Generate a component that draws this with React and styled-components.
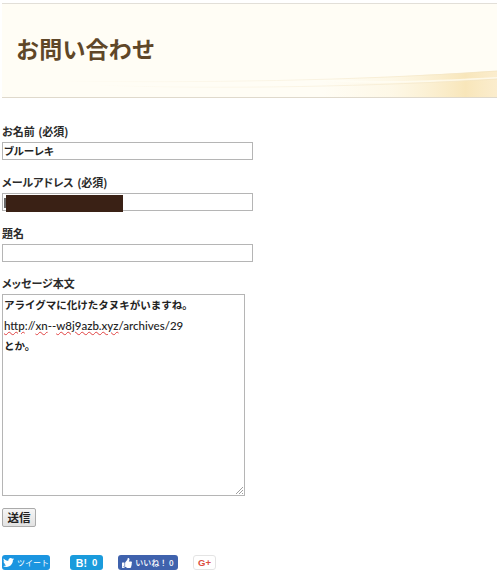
import React from "react";
import styled, { createGlobalStyle } from "styled-components";
import { FaTwitter, FaThumbsUp } from "react-icons/fa";

const GlobalStyle = createGlobalStyle`
  html, body {
    margin: 0;
    padding: 0;
    background: #fff;
  }
  body {
    font-family: "Noto Sans CJK JP", "Liberation Sans", sans-serif;
    color: #222;
  }
`;

const Page = styled.div`
  width: 500px;
  height: 577px;
  overflow: hidden;
  padding: 3px 3px 0 2px;
  box-sizing: border-box;
`;

const TitleBar = styled.div`
  position: relative;
  height: 95px;
  display: flex;
  align-items: center;
  padding: 0 15px 5px 14px;
  box-sizing: border-box;
  background: #fffdf5;
  border-top: 1px solid #e2dfd8;
  border-bottom: 1px solid #dfd9cc;
  overflow: hidden;
`;

const Swoosh = styled.svg`
  position: absolute;
  left: 0;
  bottom: 0;
`;

const Title = styled.h1`
  position: relative;
  margin: 0;
  font-family: "Noto Sans CJK JP", sans-serif;
  font-size: 23px;
  font-weight: 700;
  letter-spacing: 0.2px;
  color: #5f4728;
`;

const Form = styled.form`
  display: flex;
  flex-direction: column;
  align-items: flex-start;
  padding-top: 26px;
`;

const Label = styled.label`
  font-size: 11px;
  font-weight: 700;
  line-height: 14px;
  height: 18px;
  color: #2b2b2b;
  font-feature-settings: "palt";
  word-spacing: 1px;
`;

const Field = styled.div`
  position: relative;
  margin-bottom: ${(p) => p.$gap || 15}px;
`;

const TextInput = styled.input`
  display: block;
  width: 251px;
  height: 18px;
  padding: 0 1px 2px;
  box-sizing: border-box;
  border: 1px solid #b5b5b5;
  border-radius: 0;
  outline: none;
  background: #fff;
  font-family: inherit;
  font-size: 10.5px;
  font-weight: 700;
  color: #222;
  font-feature-settings: "palt";
`;

const Redaction = styled.div`
  position: absolute;
  left: 4px;
  top: 2px;
  width: 117px;
  height: 17px;
  background: #3a2115;

  &::before {
    content: "";
    position: absolute;
    left: -2px;
    top: 3px;
    width: 2px;
    height: 10px;
    background: #6a6a6a;
  }
`;

const MessageBox = styled.div`
  position: relative;
  width: 243px;
  height: 202px;
  padding: 0 1px;
  box-sizing: border-box;
  border: 1px solid #b5b5b5;
  font-size: 10.5px;
  font-weight: 700;
  line-height: 20.5px;
  color: #222;
`;

const MessageLine = styled.div`
  white-space: nowrap;
  height: 20.5px;
`;

const Url = styled.span`
  font-family: "Lato", "Noto Sans", sans-serif;
  font-size: 11.5px;
  font-weight: 500;
  color: #222;
`;

const Misspelled = styled.span`
  text-decoration: underline wavy #e04040 1px;
  text-underline-offset: 1px;
`;

const Grip = styled.svg`
  position: absolute;
  right: 0;
  bottom: 0;
`;

const SubmitButton = styled.button`
  display: block;
  width: 34px;
  height: 19px;
  padding: 0;
  border: 1px solid #aaa;
  border-radius: 2px;
  background: linear-gradient(#f6f6f6, #e2e2e2);
  font-family: inherit;
  font-size: 11.5px;
  font-weight: 700;
  line-height: 15px;
  color: #222;
`;

const ShareRow = styled.div`
  display: flex;
  align-items: center;
  margin-top: 28px;
`;

const ShareButton = styled.div`
  display: flex;
  align-items: center;
  justify-content: center;
  gap: ${(p) => p.$iconGap || 3}px;
  width: ${(p) => p.$width}px;
  height: 15px;
  margin-right: ${(p) => p.$after || 0}px;
  box-sizing: border-box;
  border-radius: 3px;
  background: ${(p) => p.$bg};
  border: ${(p) => (p.$outlined ? "1px solid #e4e4e4" : "none")};
  color: ${(p) => p.$color || "#fff"};
  font-size: ${(p) => p.$size || 7.5}px;
  font-weight: ${(p) => p.$weight || 500};
  white-space: nowrap;
`;

const HatenaMark = styled.span`
  font-family: "Liberation Sans", sans-serif;
  font-size: 10.5px;
  font-weight: 700;
`;

const GoogleMark = styled.span`
  font-family: "Liberation Sans", sans-serif;
  font-size: 9.5px;
  font-weight: 700;
`;

export default function App() {
  return (
    <Page>
      <GlobalStyle />
      <TitleBar>
        <Swoosh width="495" height="30" viewBox="0 0 495 30">
          <defs>
            <linearGradient id="glow" x1="0" x2="1" y1="0" y2="0">
              <stop offset="0" stopColor="#fbeecb" stopOpacity="0" />
              <stop offset="0.4" stopColor="#fbeecb" stopOpacity="0.35" />
              <stop offset="0.82" stopColor="#f8e6ba" stopOpacity="1" />
              <stop offset="1" stopColor="#fae9c4" stopOpacity="0.8" />
            </linearGradient>
            <linearGradient id="line" x1="0" x2="1" y1="0" y2="0">
              <stop offset="0" stopColor="#f8f0dc" stopOpacity="0" />
              <stop offset="0.6" stopColor="#f8f0dc" stopOpacity="1" />
              <stop offset="1" stopColor="#f3e3bd" stopOpacity="1" />
            </linearGradient>
          </defs>
          <path d="M320 12 C390 10 440 7 495 4 L495 30 L320 30 Z" fill="url(#glow)" />
          <path d="M320 13 C380 17 440 14 495 11" stroke="#fffdf5" strokeWidth="2" fill="none" opacity="0.7" />
          <path d="M50 14 C200 16 350 14 495 4" stroke="url(#line)" strokeWidth="0.8" fill="none" />
          <path d="M90 18 C220 23 380 19 495 12" stroke="url(#line)" strokeWidth="0.8" fill="none" />
        </Swoosh>
        <Title>お問い合わせ</Title>
      </TitleBar>
      <Form onSubmit={(e) => e.preventDefault()}>
        <Label>お名前 (必須)</Label>
        <Field>
          <TextInput defaultValue="ブルーレキ" />
        </Field>
        <Label>メールアドレス (必須)</Label>
        <Field>
          <TextInput />
          <Redaction />
        </Field>
        <Label>題名</Label>
        <Field $gap={14}>
          <TextInput />
        </Field>
        <Label>メッセージ本文</Label>
        <Field $gap={12}>
          <MessageBox>
            <MessageLine>アライグマに化けたタヌキがいますね。</MessageLine>
            <MessageLine>
              <Url>
                <Misspelled>http</Misspelled>://<Misspelled>xn</Misspelled>--
                <Misspelled>w8j9azb.xyz</Misspelled>/archives/29
              </Url>
            </MessageLine>
            <MessageLine>とか。</MessageLine>
            <Grip width="9" height="9" viewBox="0 0 9 9">
              <path d="M1 8 L8 1 M4 8 L8 4 M7 8 L8 7" stroke="#888" strokeWidth="0.8" fill="none" />
            </Grip>
          </MessageBox>
        </Field>
        <SubmitButton type="submit">送信</SubmitButton>
        <ShareRow>
          <ShareButton $width={48} $after={20} $bg="#1b95e0" $size={8} $weight={400}>
            <FaTwitter size={11} />
            ツイート
          </ShareButton>
          <ShareButton $width={33} $after={15} $bg="#1a9bdc" $size={9} $weight={700} $iconGap={5}>
            <HatenaMark>B!</HatenaMark>0
          </ShareButton>
          <ShareButton $width={60} $after={15} $bg="#3f62ad" $size={8} $weight={500}>
            <FaThumbsUp size={10} />
            いいね！ 0
          </ShareButton>
          <ShareButton $width={23} $bg="#fff" $outlined $color="#dc4e41">
            <GoogleMark>G+</GoogleMark>
          </ShareButton>
        </ShareRow>
      </Form>
    </Page>
  );
}
